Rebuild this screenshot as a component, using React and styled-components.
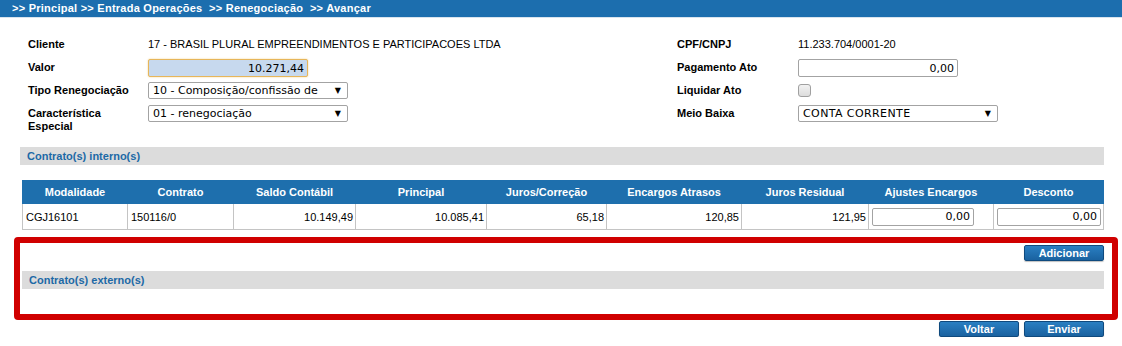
import React from "react";
import styled, { createGlobalStyle } from "styled-components";

const GlobalStyle = createGlobalStyle`
  body {
    margin: 0;
    background: #fff;
    font-family: "Liberation Sans", Arial, sans-serif;
    font-size: 11px;
    color: #000;
  }
`;

const Breadcrumb = styled.div`
  height: 17px;
  line-height: 16px;
  background: #1c6eae;
  border-bottom: 1px solid #d8e4ee;
  color: #fff;
  font-weight: bold;
  padding-left: 12px;
  letter-spacing: 0.25px;
  white-space: pre;
`;

const Content = styled.div`
  width: 1084px;
  margin-left: 20px;
`;

const FormGrid = styled.div`
  display: grid;
  grid-template-columns: 120px 529px 121px 1fr;
  grid-auto-rows: minmax(18px, auto);
  row-gap: 5px;
  align-items: start;
  margin: 18px 0 0 8px;
`;

const Label = styled.div`
  font-weight: bold;
  line-height: 13px;
  padding-top: 2px;
`;

const Value = styled.div`
  line-height: 13px;
  padding-top: 2px;
`;

const TextInput = styled.input`
  box-sizing: border-box;
  width: ${(p) => p.$w}px;
  height: ${(p) => p.$h || 18}px;
  padding: 0 3px;
  margin: 0;
  text-align: right;
  font-family: "DejaVu Sans", Verdana, sans-serif;
  font-size: 11px;
  color: #000;
  background: ${(p) => (p.$active ? "#c7d9ee" : "#fff")};
  border: 1px solid ${(p) => (p.$active ? "#e7b65a" : "#a3a3a3")};
  border-radius: 2px;
  box-shadow: ${(p) => (p.$active ? "0 0 2px #f3d08a" : "none")};
  outline: none;
`;

const Select = styled.div`
  box-sizing: border-box;
  width: ${(p) => p.$w}px;
  height: 17px;
  display: flex;
  align-items: center;
  justify-content: space-between;
  padding: 0 6px 0 4px;
  font-family: "DejaVu Sans", Verdana, sans-serif;
  font-size: 11px;
  border: 1px solid #a3a3a3;
  border-radius: 2px;
  background: #fff;
  letter-spacing: ${(p) => (p.$wide ? "0.4px" : "0")};
  white-space: nowrap;
  overflow: hidden;
`;

const Arrow = styled.span`
  font-size: 8px;
  letter-spacing: 0;
`;

const Checkbox = styled.div`
  width: 11px;
  height: 11px;
  margin-top: 2px;
  border: 1px solid #a0a0a0;
  border-radius: 3px;
  background: linear-gradient(#f2f2f2, #dcdcdc);
`;

const SectionBar = styled.div`
  height: 18px;
  line-height: 18px;
  background: #dcdcdc;
  color: #1c69a6;
  font-weight: bold;
  padding-left: 7px;
  margin: ${(p) => p.$m};
`;

const Table = styled.table`
  width: 1081px;
  margin: 15px 0 0 2px;
  border-collapse: collapse;
  table-layout: fixed;
`;

const Th = styled.th`
  height: 22px;
  background: #1e6fad;
  color: #fff;
  font-weight: bold;
  font-size: 11px;
  padding: 0;
  border: 1px solid #1e6fad;
  border-left: 1px solid #7fa9cf;
  &:first-child {
    border-left-color: #1e6fad;
  }
`;

const Td = styled.td`
  height: 25px;
  padding: 0 ${(p) => (p.$right ? 2 : 3)}px 0 3px;
  border: 1px solid #c4c4c4;
  text-align: ${(p) => p.$align || "left"};
  font-size: 11px;
`;

const Highlight = styled.div`
  margin: 7px -14px 0 -6px;
  border: 6px solid #d00000;
  border-radius: 4px;
  padding: 2px 8px 25px 2px;
`;

const ButtonRow = styled.div`
  display: flex;
  justify-content: flex-end;
  gap: 5px;
  margin-top: ${(p) => p.$top || 0}px;
`;

const Button = styled.button`
  width: 80px;
  height: 16px;
  padding: 0;
  font-family: "Liberation Sans", Arial, sans-serif;
  font-size: 11px;
  font-weight: bold;
  color: #fff;
  background: linear-gradient(#2a7fc2, #1a62a0);
  border: 1px solid #0f4a7e;
  border-radius: 2px;
  box-shadow: 0 1px 1px rgba(0, 0, 0, 0.25);
  line-height: 14px;
`;

const columns = [
  { name: "Modalidade", w: 105 },
  { name: "Contrato", w: 106 },
  { name: "Saldo Contábil", w: 122 },
  { name: "Principal", w: 131 },
  { name: "Juros/Correção", w: 120 },
  { name: "Encargos Atrasos", w: 135 },
  { name: "Juros Residual", w: 127 },
  { name: "Ajustes Encargos", w: 125 },
  { name: "Desconto", w: 110 },
];

export default function App() {
  return (
    <>
      <GlobalStyle />
      <Breadcrumb>{">> Principal >> Entrada Operações  >> Renegociação  >> Avançar"}</Breadcrumb>
      <Content>
        <FormGrid>
          <Label>Cliente</Label>
          <Value>17 - BRASIL PLURAL EMPREENDIMENTOS E PARTICIPACOES LTDA</Value>
          <Label>CPF/CNPJ</Label>
          <Value>11.233.704/0001-20</Value>

          <Label>Valor</Label>
          <TextInput $w={160} $active readOnly value="10.271,44" />
          <Label>Pagamento Ato</Label>
          <TextInput $w={160} readOnly value="0,00" />

          <Label>Tipo Renegociação</Label>
          <Select $w={200}>
            10 - Composição/confissão de <Arrow>▼</Arrow>
          </Select>
          <Label>Liquidar Ato</Label>
          <Checkbox />

          <Label>
            Característica
            <br />
            Especial
          </Label>
          <Select $w={200}>
            01 - renegociação <Arrow>▼</Arrow>
          </Select>
          <Label>Meio Baixa</Label>
          <Select $w={200} $wide>
            CONTA CORRENTE <Arrow>▼</Arrow>
          </Select>
        </FormGrid>

        <SectionBar $m="14px 0 0 0">Contrato(s) interno(s)</SectionBar>

        <Table>
          <colgroup>
            {columns.map((c) => (
              <col key={c.name} style={{ width: c.w }} />
            ))}
          </colgroup>
          <thead>
            <tr>
              {columns.map((c) => (
                <Th key={c.name}>{c.name}</Th>
              ))}
            </tr>
          </thead>
          <tbody>
            <tr>
              <Td>CGJ16101</Td>
              <Td>150116/0</Td>
              <Td $align="right" $right>10.149,49</Td>
              <Td $align="right" $right>10.085,41</Td>
              <Td $align="right" $right>65,18</Td>
              <Td $align="right" $right>120,85</Td>
              <Td $align="right" $right>121,95</Td>
              <Td>
                <TextInput $w={102} readOnly value="0,00" />
              </Td>
              <Td $align="right" $right>
                <TextInput $w={104} readOnly value="0,00" />
              </Td>
            </tr>
          </tbody>
        </Table>

        <Highlight>
          <ButtonRow>
            <Button>Adicionar</Button>
          </ButtonRow>
          <SectionBar $m="10px 0 0 0">Contrato(s) externo(s)</SectionBar>
        </Highlight>

        <ButtonRow $top={1}>
          <Button>Voltar</Button>
          <Button>Enviar</Button>
        </ButtonRow>
      </Content>
    </>
  );
}
